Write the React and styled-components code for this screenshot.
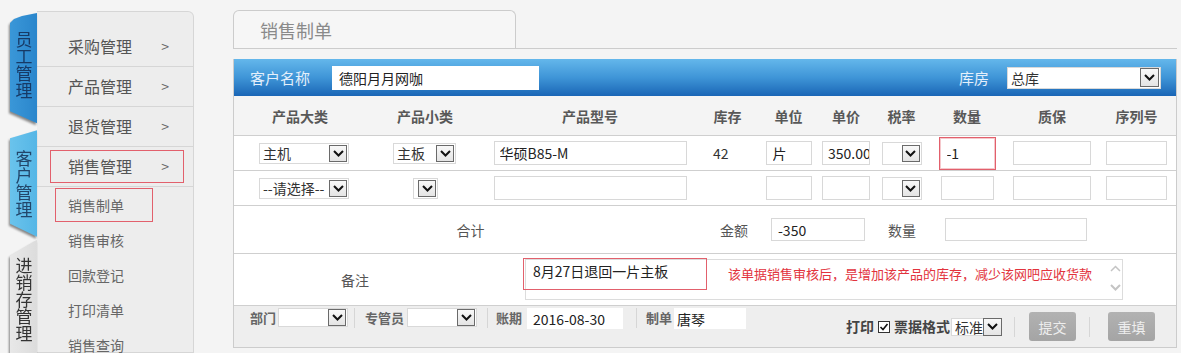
import React from "react";
import styled, { createGlobalStyle } from "styled-components";

const GlobalStyle = createGlobalStyle`
  html, body { margin: 0; padding: 0; background: #f4f4f4; }
  body { font-family: "Noto Sans CJK SC", "Noto Sans", sans-serif; color: #333; }
  * { box-sizing: border-box; }
`;

const Page = styled.div`
  display: flex;
  height: 353px;
  overflow: hidden;
  padding-top: 10px;
  background: #f4f4f4;
`;

/* ---------- left vertical tabs ---------- */
const SideTabs = styled.div`
  width: 27px;
  margin-left: 10px;
  padding-top: 3px;
  display: flex;
  flex-direction: column;
`;

const tabShapes = {
  blue: { bg: "linear-gradient(90deg,#3a97d8,#2a86cc)", fg: "#173a66", h: "117px", clip: "polygon(0 10px, 4px 6px, 12px 3px, 100% 0, 100% 100%, 0 calc(100% - 12px))", gap: "7px" },
  sky: { bg: "linear-gradient(90deg,#6ac3ec,#55b6e6)", fg: "#22466a", h: "113px", clip: "polygon(0 8px, 100% 0, 100% 100%, 0 calc(100% - 13px))", gap: "3px" },
  gray: { bg: "linear-gradient(90deg,#e8e8e8,#dcdcdc)", fg: "#333", h: "120px", clip: "polygon(0 16px, 100% 0, 100% 100%, 0 100%)", gap: "0" },
};

const SideTab = styled.div`
  height: ${(p) => tabShapes[p.$tone].h};
  margin-bottom: ${(p) => tabShapes[p.$tone].gap};
  filter: drop-shadow(-1px 2px 1px rgba(0, 0, 0, 0.45));
`;

const TabFace = styled.div`
  height: 100%;
  background: ${(p) => tabShapes[p.$tone].bg};
  clip-path: ${(p) => tabShapes[p.$tone].clip};
  display: flex;
  justify-content: center;
  align-items: ${(p) => (p.$tone === "gray" ? "flex-start" : "center")};
  padding-top: ${(p) => (p.$tone === "gray" ? "17px" : "0")};
  padding-bottom: ${(p) => (p.$tone === "blue" ? "6px" : "0")};
  padding-left: 1px;
`;

const TabText = styled.span`
  writing-mode: vertical-rl;
  text-orientation: upright;
  font-size: 17px;
  line-height: 25px;
  color: ${(p) => tabShapes[p.$tone].fg};
`;

/* ---------- side menu ---------- */
const Menu = styled.div`
  width: 157px;
  margin-top: 1px;
  background: #ededed;
  border: 1px solid #d6d6d6;
  border-left: none;
  border-top-right-radius: 6px;
  padding-top: 15px;
`;

const MenuRow = styled.div`
  height: 40px;
  border-bottom: 1px solid #d6d6d6;
  padding: 3px 9px 3px 13px;
  display: flex;
`;

const MenuLabel = styled.div`
  flex: 1;
  display: flex;
  align-items: center;
  justify-content: space-between;
  border: 1px solid ${(p) => (p.$marked ? "#e2606c" : "transparent")};
  padding: 0 14px 1px 17px;
  font-size: 16px;
  color: #555;
`;

const Caret = styled.span`
  font-size: 14px;
  color: #666;
`;

const SubRow = styled.div`
  height: 35px;
  padding: 1px 0 0 18px;
`;

const SubLabel = styled.div`
  width: 98px;
  height: 34px;
  display: flex;
  align-items: center;
  padding-left: 12px;
  border: 1px solid ${(p) => (p.$marked ? "#e2606c" : "transparent")};
  font-size: 14px;
  color: #666;
`;

/* ---------- main ---------- */
const Main = styled.div`
  flex: 1;
  margin-left: 39px;
  margin-right: 4px;
  display: flex;
  flex-direction: column;
`;

const TabBar = styled.div`
  height: 39px;
  border-bottom: 1px solid #cccccc;
  display: flex;
  align-items: flex-end;
`;

const PageTab = styled.div`
  width: 283px;
  height: 38px;
  border: 1px solid #cccccc;
  border-bottom: none;
  border-radius: 6px 6px 0 0;
  background: #f6f6f6;
  padding: 7px 0 0 26px;
  font-size: 18px;
  line-height: 24px;
  color: #8a8a8a;
`;

const Panel = styled.div`
  margin-top: 10px;
  border: 1px solid #cccccc;
  border-top: none;
  display: flex;
  flex-direction: column;
`;

const BlueBar = styled.div`
  height: 37px;
  display: flex;
  align-items: center;
  padding: 0 15px 0 16px;
  background: linear-gradient(180deg, #64b7eb 0%, #3f95d7 50%, #1a66b6 100%);
`;

const BarLabel = styled.span`
  font-size: 15px;
  color: #e4effb;
  margin-right: ${(p) => p.$mr || 0}px;
  margin-left: ${(p) => (p.$push ? "auto" : "0")};
`;

const Row = styled.div`
  display: flex;
  align-items: center;
  height: ${(p) => p.$h}px;
  background: ${(p) => p.$bg || "#fff"};
  border-bottom: 1px solid #cfcfcf;
  padding-left: 1px;
`;

const Cell = styled.div`
  width: ${(p) => p.$w}px;
  display: flex;
  align-items: center;
  justify-content: ${(p) => p.$justify || "center"};
  padding-left: ${(p) => p.$pl || 0}px;
  font-size: 14px;
  color: #333;
`;

const HeadText = styled.span`
  font-size: 14px;
  font-weight: 700;
  color: #585858;
`;

const Field = styled.input`
  width: ${(p) => p.$w}px;
  height: ${(p) => p.$h || 24}px;
  margin-left: ${(p) => p.$ml || 0}px;
  border: 1px solid ${(p) => (p.$flat ? "transparent" : "#d8d8d8")};
  border-radius: 0;
  background: #fff;
  font: 14px "Noto Sans CJK SC", "Noto Sans", sans-serif;
  color: #222;
  padding: 0 0 0 ${(p) => p.$pl ?? 4}px;
  outline: none;
`;

/* red annotation frame around a field */
const MarkFrame = styled.div`
  display: flex;
  align-items: center;
  width: 57px;
  height: 33px;
  border: 1px solid #e2606c;
  box-shadow: inset 0 0 0 1px rgba(226, 96, 108, 0.35);
  background: #fff;
  padding-left: 3px;
`;

const SelectBox = styled.span`
  display: inline-flex;
  align-items: center;
  justify-content: space-between;
  width: ${(p) => p.$w}px;
  height: ${(p) => p.$h || 21}px;
  margin-left: ${(p) => p.$ml || 0}px;
  border: 1px solid #d9d9d9;
  background: #fff;
  padding: 0 1px 0 3px;
  font-size: 14px;
  color: #333;
  white-space: nowrap;
`;

const ArrowBtn = styled.span`
  width: ${(p) => p.$aw || 18}px;
  height: ${(p) => p.$ah || 17}px;
  display: flex;
  align-items: center;
  justify-content: center;
  border: 1px solid #6a6a6a;
  background: linear-gradient(#f8f8f8, #e4e4e4);
  flex-shrink: 0;
`;

const Chevron = ({ color = "#111" }) => (
  <svg width="11" height="7" viewBox="0 0 11 7">
    <polyline points="1,1 5.5,5.5 10,1" fill="none" stroke={color} strokeWidth="2" />
  </svg>
);

const Select = ({ w, h, text, ml, aw, ah }) => (
  <SelectBox $w={w} $h={h} $ml={ml}>
    <span>{text}</span>
    <ArrowBtn $aw={aw} $ah={ah}>
      <Chevron />
    </ArrowBtn>
  </SelectBox>
);

const SumLabel = styled.span`
  width: ${(p) => p.$w || "auto"};
  text-align: ${(p) => (p.$w ? "center" : "left")};
  margin-left: ${(p) => p.$ml || 0}px;
  font-size: 14px;
  color: #555;
`;

const Memo = styled.div`
  width: 598px;
  height: 41px;
  margin-left: 50px;
  border: 1px solid #dcdcdc;
  display: flex;
  align-items: flex-start;
`;

const MemoMark = styled.div`
  width: 184px;
  height: 32px;
  margin: -2px 0 0 -3px;
  border: 1px solid #e2606c;
  padding: 2px 0 0 9px;
  font-size: 14px;
  line-height: 20px;
  color: #222;
`;

const MemoNote = styled.span`
  margin: 5px 0 0 21px;
  font-size: 13px;
  line-height: 18px;
  color: #e2333d;
`;

const ScrollArrows = styled.div`
  margin-left: auto;
  margin-right: 1px;
  margin-top: 5px;
  display: flex;
  flex-direction: column;
  gap: 12px;
`;

const Footer = styled.div`
  height: 41px;
  background: #eeeeee;
  display: flex;
  align-items: flex-start;
  padding: 2px 21px 0 16px;
`;

const FootLabel = styled.span`
  font-size: ${(p) => (p.$big ? 14 : 13)}px;
  font-weight: 700;
  line-height: 19px;
  color: ${(p) => (p.$dark ? "#444" : "#666")};
  margin-left: ${(p) => p.$ml || 0}px;
`;

const Divider = styled.span`
  width: 1px;
  height: 20px;
  background: #d6d6d6;
  margin-left: ${(p) => p.$ml || 0}px;
  align-self: ${(p) => (p.$center ? "center" : "flex-start")};
`;

const RightGroup = styled.div`
  margin-left: auto;
  margin-top: 4px;
  height: 29px;
  display: flex;
  align-items: center;
`;

const Check = styled.span`
  width: 12px;
  height: 12px;
  margin-left: 4px;
  border: 1px solid #333;
  background: #fff;
  display: inline-flex;
  align-items: center;
  justify-content: center;
`;

const Button = styled.span`
  width: 47px;
  height: 29px;
  margin-left: ${(p) => p.$ml}px;
  border-radius: 3px;
  background: linear-gradient(#b2b2b2, #a4a4a4);
  color: #eeeeee;
  font-size: 14px;
  display: flex;
  align-items: center;
  justify-content: center;
`;

const cols = [130, 120, 210, 65, 57, 58, 53, 78, 92, 77];
const heads = ["产品大类", "产品小类", "产品型号", "库存", "单位", "单价", "税率", "数量", "质保", "序列号"];

export default function App() {
  return (
    <>
      <GlobalStyle />
      <Page>
        <SideTabs>
          {[
            ["blue", "员工管理"],
            ["sky", "客户管理"],
            ["gray", "进销存管理"],
          ].map(([tone, label]) => (
            <SideTab key={tone} $tone={tone}>
              <TabFace $tone={tone}>
                <TabText $tone={tone}>{label}</TabText>
              </TabFace>
            </SideTab>
          ))}
        </SideTabs>

        <Menu>
          {["采购管理", "产品管理", "退货管理", "销售管理"].map((m) => (
            <MenuRow key={m}>
              <MenuLabel $marked={m === "销售管理"}>
                <span>{m}</span>
                <Caret>&gt;</Caret>
              </MenuLabel>
            </MenuRow>
          ))}
          {["销售制单", "销售审核", "回款登记", "打印清单", "销售查询"].map((s) => (
            <SubRow key={s}>
              <SubLabel $marked={s === "销售制单"}>{s}</SubLabel>
            </SubRow>
          ))}
        </Menu>

        <Main>
          <TabBar>
            <PageTab>销售制单</PageTab>
          </TabBar>
          <Panel>
            <BlueBar>
              <BarLabel $mr={22}>客户名称</BarLabel>
              <Field $w={207} $h={24} $pl={6} $flat defaultValue="德阳月月网咖" readOnly />
              <BarLabel $push $mr={18}>库房</BarLabel>
              <Select w={154} h={22} text="总库" aw={19} ah={19} />
            </BlueBar>

            <Row $h={40} $bg="#f4f4f4">
              {heads.map((h, i) => (
                <Cell key={h} $w={cols[i]}>
                  <HeadText>{h}</HeadText>
                </Cell>
              ))}
            </Row>

            <Row $h={35}>
              <Cell $w={cols[0]} $justify="flex-start" $pl={24}>
                <Select w={90} text="主机" />
              </Cell>
              <Cell $w={cols[1]} $justify="flex-start" $pl={28}>
                <Select w={63} text="主板" />
              </Cell>
              <Cell $w={cols[2]}>
                <Field $w={193} $pl={5} defaultValue="华硕B85-M" readOnly />
              </Cell>
              <Cell $w={cols[3]} $justify="flex-start" $pl={18}>42</Cell>
              <Cell $w={cols[4]}>
                <Field $w={46} $pl={6} defaultValue="片" readOnly />
              </Cell>
              <Cell $w={cols[5]}>
                <Field $w={48} $pl={5} defaultValue="350.00" readOnly />
              </Cell>
              <Cell $w={cols[6]}>
                <Select w={40} h={23} text="" />
              </Cell>
              <Cell $w={cols[7]}>
                <MarkFrame>
                  <Field $w={50} $h={24} $pl={3} $flat defaultValue="-1" readOnly />
                </MarkFrame>
              </Cell>
              <Cell $w={cols[8]}>
                <Field $w={78} readOnly />
              </Cell>
              <Cell $w={cols[9]}>
                <Field $w={61} readOnly />
              </Cell>
            </Row>

            <Row $h={35}>
              <Cell $w={cols[0]} $justify="flex-start" $pl={24}>
                <Select w={90} text="--请选择--" />
              </Cell>
              <Cell $w={cols[1]} $justify="flex-start" $pl={48}>
                <Select w={25} text="" />
              </Cell>
              <Cell $w={cols[2]}>
                <Field $w={193} readOnly />
              </Cell>
              <Cell $w={cols[3]} />
              <Cell $w={cols[4]}>
                <Field $w={46} readOnly />
              </Cell>
              <Cell $w={cols[5]}>
                <Field $w={48} readOnly />
              </Cell>
              <Cell $w={cols[6]}>
                <Select w={40} h={23} text="" />
              </Cell>
              <Cell $w={cols[7]}>
                <Field $w={53} readOnly />
              </Cell>
              <Cell $w={cols[8]}>
                <Field $w={78} readOnly />
              </Cell>
              <Cell $w={cols[9]}>
                <Field $w={61} readOnly />
              </Cell>
            </Row>

            <Row $h={48}>
              <SumLabel $w="471px">合计</SumLabel>
              <SumLabel $ml={14}>金额</SumLabel>
              <Field $w={94} $h={23} $ml={23} $pl={6} defaultValue="-350" readOnly />
              <SumLabel $ml={23}>数量</SumLabel>
              <Field $w={142} $h={23} $ml={29} readOnly />
            </Row>

            <Row $h={52}>
              <SumLabel $w="240px">备注</SumLabel>
              <Memo>
                <MemoMark>8月27日退回一片主板</MemoMark>
                <MemoNote>该单据销售审核后，是增加该产品的库存，减少该网吧应收货款</MemoNote>
                <ScrollArrows>
                  <svg width="11" height="7" viewBox="0 0 11 7">
                    <polyline points="1,6 5.5,1.5 10,6" fill="none" stroke="#c4c4c4" strokeWidth="1.5" />
                  </svg>
                  <Chevron color="#c4c4c4" />
                </ScrollArrows>
              </Memo>
            </Row>

            <Footer>
              <FootLabel>部门</FootLabel>
              <Select w={70} h={19} text="" ml={2} ah={17} />
              <Divider $ml={6} />
              <FootLabel $ml={10}>专管员</FootLabel>
              <Select w={70} h={19} text="" ml={3} ah={17} />
              <Divider $ml={10} />
              <FootLabel $ml={8}>账期</FootLabel>
              <Field $w={96} $h={21} $ml={5} $pl={5} $flat defaultValue="2016-08-30" readOnly />
              <Divider $ml={13} />
              <FootLabel $ml={9}>制单</FootLabel>
              <Field $w={72} $h={21} $ml={2} $pl={2} $flat defaultValue="唐琴" readOnly />

              <RightGroup>
                <FootLabel $dark $big>打印</FootLabel>
                <Check>
                  <svg width="10" height="10" viewBox="0 0 10 10">
                    <polyline points="1.5,5 4,7.5 8.5,2" fill="none" stroke="#111" strokeWidth="1.6" />
                  </svg>
                </Check>
                <FootLabel $dark $big $ml={4}>票据格式</FootLabel>
                <Select w={50} h={18} text="标准" ml={1} aw={19} ah={18} />
                <Divider $ml={13} $center />
                <Button $ml={14}>提交</Button>
                <Divider $ml={13} $center />
                <Button $ml={18}>重填</Button>
              </RightGroup>
            </Footer>
          </Panel>
        </Main>
      </Page>
    </>
  );
}
